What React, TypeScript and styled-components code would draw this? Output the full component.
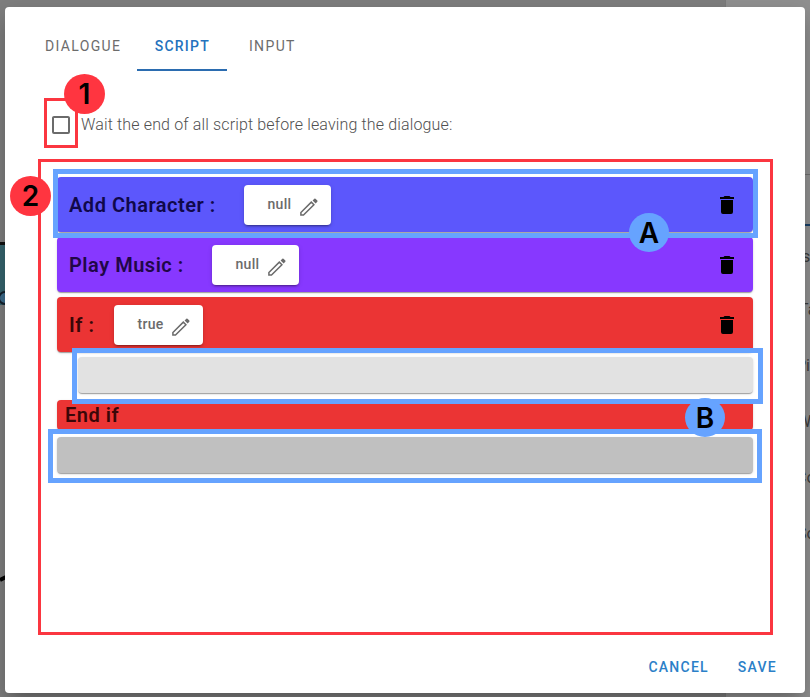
import React from "react";
import styled, { createGlobalStyle } from "styled-components";

const GlobalStyle = createGlobalStyle`
  * { box-sizing: border-box; }
  body { margin: 0; font-family: Roboto, "Liberation Sans", sans-serif; overflow: hidden; }
`;

const Screen = styled.div`
  position: relative;
  width: 810px;
  height: 697px;
  padding: 7px 5px 4px;
  overflow: hidden;
  background: #777;
`;

const Backdrop = styled.div`
  position: absolute;
  inset: 0;
  display: grid;
  grid-template-columns: 725px 1fr;
  background: #7e7e7e;
`;

const Stage = styled.div`
  padding-top: 242px;
`;

const TealNode = styled.div`
  height: 63px;
  width: 40px;
  background: #35646d;
  border-top: 3px solid #111;
`;

const SidePanel = styled.div`
  background: #909090;
  border-left: 1px solid #7b7b7b;
  padding-top: 174px;
`;

const SideTab = styled.div`
  height: 52px;
  border-top: 1px solid #6e6e6e;
  border-bottom: 2px solid #173f66;
`;

const SideLabel = styled.div<{ $inset: number; $rise: number }>`
  height: 56px;
  line-height: ${(p) => 62 - p.$rise * 2}px;
  padding-left: ${(p) => p.$inset}px;
  font-size: 16px;
  color: #3c3c3c;
  white-space: nowrap;
`;

const EdgeDrawing = styled.svg`
  position: absolute;
  left: 0;
  top: 0;
`;

const Dialog = styled.section`
  position: relative;
  display: flex;
  flex-direction: column;
  height: 686px;
  border-radius: 4px;
  background: #fff;
  padding: 16px 24px 0;
  box-shadow: 0 11px 15px -7px rgba(0, 0, 0, 0.2), 0 10px 24px 3px rgba(0, 0, 0, 0.16);
`;

const Tabs = styled.nav`
  display: flex;
  height: 48px;
`;

const Tab = styled.button<{ $active?: boolean }>`
  min-width: 90px;
  border: 0;
  border-bottom: 2px solid ${(p) => (p.$active ? "#2b6cb0" : "transparent")};
  background: none;
  padding: 0 16px;
  font: ${(p) => (p.$active ? 500 : 400)} 14px Roboto, sans-serif;
  letter-spacing: ${(p) => (p.$active ? 1.25 : 1.35)}px;
  color: ${(p) => (p.$active ? "#2472bd" : "#6c6c6c")};
`;

const WaitOption = styled.label`
  display: flex;
  align-items: center;
  gap: 8px;
  height: 24px;
  margin: 42px 0 40px 20px;
  font-size: 16px;
  font-weight: 300;
  line-height: 24px;
  letter-spacing: 0.145px;
  color: #505050;
`;

const ScriptList = styled.div`
  display: flex;
  flex-direction: column;
  width: 696px;
  height: 457px;
  margin-left: 28px;
`;

const raised = "0 2px 1px -1px rgba(0,0,0,.2), 0 1px 1px rgba(0,0,0,.14), 0 1px 3px rgba(0,0,0,.12)";

const Instruction = styled.div<{ $color: string; $ink: string }>`
  display: flex;
  align-items: center;
  height: 55px;
  margin-bottom: 5px;
  padding: 0 14px 0 12px;
  border-radius: 4px;
  background: ${(p) => p.$color};
  color: ${(p) => p.$ink};
  box-shadow: ${raised};
`;

const InstructionName = styled.span<{ $width: number }>`
  width: ${(p) => p.$width}px;
  font-size: 20px;
  font-weight: 600;
  letter-spacing: 0.52px;
  white-space: nowrap;
`;

const ValueButton = styled.button<{ $width: number }>`
  display: flex;
  align-items: center;
  justify-content: space-between;
  width: ${(p) => p.$width}px;
  height: 40px;
  padding: 0 10px 0 23.5px;
  border: 0;
  border-radius: 4px;
  background: #fff;
  color: #6b6b6b;
  font: 500 14px Roboto, sans-serif;
  letter-spacing: 0.3px;
  box-shadow: 0 3px 1px -2px rgba(0,0,0,.2), 0 2px 2px rgba(0,0,0,.14), 0 1px 5px rgba(0,0,0,.12);

  svg { margin-top: 4px; }
`;

const Value = styled.span`
  padding-bottom: 2px;
`;

const DeleteIcon = styled.svg`
  margin-left: auto;
`;

const DropSlot = styled.div<{ $indent?: boolean }>`
  height: 36px;
  margin: 0 0 7px ${(p) => (p.$indent ? 21 : 0)}px;
  border-radius: 4px;
  background: ${(p) => (p.$indent ? "#e2e2e2" : "#c0c0c0")};
  box-shadow: ${raised};
`;

const EndBlock = styled.div`
  height: 30px;
  margin-bottom: 7px;
  padding-left: 8px;
  border-radius: 4px;
  background: #eb3434;
  color: #3a0708;
  font-size: 20px;
  font-weight: 600;
  line-height: 30px;
  letter-spacing: 0.5px;
  box-shadow: ${raised};
`;

const Actions = styled.footer`
  display: flex;
  justify-content: flex-end;
  gap: 29px;
  padding: 14px 4px 0 0;
`;

const Action = styled.button`
  border: 0;
  padding: 1px 0 0;
  height: 36px;
  background: none;
  font: 500 14px Roboto, sans-serif;
  letter-spacing: 1.25px;
  color: #2b80c8;
`;

const Outline = styled.div<{ $x: number; $y: number; $w: number; $h: number; $blue?: boolean }>`
  position: absolute;
  left: ${(p) => p.$x}px;
  top: ${(p) => p.$y}px;
  width: ${(p) => p.$w}px;
  height: ${(p) => p.$h}px;
  border: ${(p) => (p.$blue ? "5px solid #66a3ff" : "3px solid #fb3640")};
`;

const Marker = styled.div<{ $x: number; $y: number; $blue?: boolean }>`
  position: absolute;
  left: ${(p) => p.$x}px;
  top: ${(p) => p.$y}px;
  width: ${(p) => (p.$blue ? 40 : 41)}px;
  height: ${(p) => (p.$blue ? 39 : 40)}px;
  border-radius: 50%;
  background: ${(p) => (p.$blue ? "#66a3ff" : "#ff3540")};
  color: #000;
  font: 600 28px/41px Inter, sans-serif;
  text-align: center;
`;

const Pencil = () => (
  <svg width="24" height="24" viewBox="0 0 24 24">
    <path d="M3.9 20.1V17.5L14.3 7.1L16.9 9.7L6.5 20.1Z" fill="none" stroke="#6b6b6b" strokeWidth="1.5" />
    <path d="M15.6 5.4L17.3 3.7Q17.9 3.1 18.5 3.7L20.3 5.5Q20.9 6.1 20.3 6.7L18.6 8.4Z" fill="#6b6b6b" />
  </svg>
);

const Trash = () => (
  <DeleteIcon width="24" height="24" viewBox="0 0 24 24">
    <path d="M19 4H15.5L14.5 3H9.5L8.5 4H5V6H19M6 19A2 2 0 0 0 8 21H16A2 2 0 0 0 18 19V7H6V19Z" />
  </DeleteIcon>
);

const instructions = [
  { name: "Add Character :", value: "null", color: "#5c57fc", ink: "#10084a", nameWidth: 175, width: 87 },
  { name: "Play Music :", value: "null", color: "#8738ff", ink: "#210747", nameWidth: 143, width: 87 },
  { name: "If :", value: "true", color: "#eb3434", ink: "#3a0708", nameWidth: 45, width: 89 },
];

const sideLabels = [
  { text: "s", inset: 76, rise: 0 },
  { text: "Ta", inset: 73, rise: 3 },
  { text: "Pi", inset: 70, rise: 3 },
  { text: "W", inset: 71, rise: 3 },
  { text: "Co", inset: 70, rise: 3 },
  { text: "So", inset: 71, rise: 3 },
];

export default function App() {
  return (
    <>
      <GlobalStyle />
      <Screen>
        <Backdrop>
          <Stage>
            <TealNode />
          </Stage>
          <SidePanel>
            <SideTab />
            {sideLabels.map((l) => (
              <SideLabel key={l.text} $inset={l.inset} $rise={l.rise}>{l.text}</SideLabel>
            ))}
          </SidePanel>
          <EdgeDrawing width="10" height="697">
            <circle cx="5" cy="298" r="6" fill="#3d6c8c" stroke="#14202c" strokeWidth="2" />
            <path d="M0 580L6 577" stroke="#000" strokeWidth="4" />
          </EdgeDrawing>
        </Backdrop>
        <Dialog>
          <Tabs>
            <Tab>DIALOGUE</Tab>
            <Tab $active>SCRIPT</Tab>
            <Tab>INPUT</Tab>
          </Tabs>
          <WaitOption>
            <svg width="24" height="24" viewBox="0 0 24 24" fill="#6b6b6b">
              <path d="M19 3H5C3.89 3 3 3.89 3 5V19A2 2 0 0 0 5 21H19A2 2 0 0 0 21 19V5C21 3.89 20.1 3 19 3M19 5V19H5V5H19Z" />
            </svg>
            Wait the end of all script before leaving the dialogue:
          </WaitOption>
          <ScriptList>
            {instructions.map((i) => (
              <Instruction key={i.name} $color={i.color} $ink={i.ink}>
                <InstructionName $width={i.nameWidth}>{i.name}</InstructionName>
                <ValueButton $width={i.width}>
                  <Value>{i.value}</Value>
                  <Pencil />
                </ValueButton>
                <Trash />
              </Instruction>
            ))}
            <DropSlot $indent />
            <EndBlock>End if</EndBlock>
            <DropSlot />
          </ScriptList>
          <Actions>
            <Action>CANCEL</Action>
            <Action>SAVE</Action>
          </Actions>
        </Dialog>
        <Outline $x={44} $y={98} $w={34} $h={50} />
        <Outline $x={38} $y={159} $w={735} $h={476} />
        <Outline $blue $x={53} $y={169} $w={705} $h={69} />
        <Outline $blue $x={72} $y={348} $w={691} $h={56} />
        <Outline $blue $x={48} $y={429} $w={714} $h={54} />
        <Marker $x={64} $y={74}>1</Marker>
        <Marker $x={10} $y={176}>2</Marker>
        <Marker $blue $x={629} $y={213}>A</Marker>
        <Marker $blue $x={685} $y={398}>B</Marker>
      </Screen>
    </>
  );
}
